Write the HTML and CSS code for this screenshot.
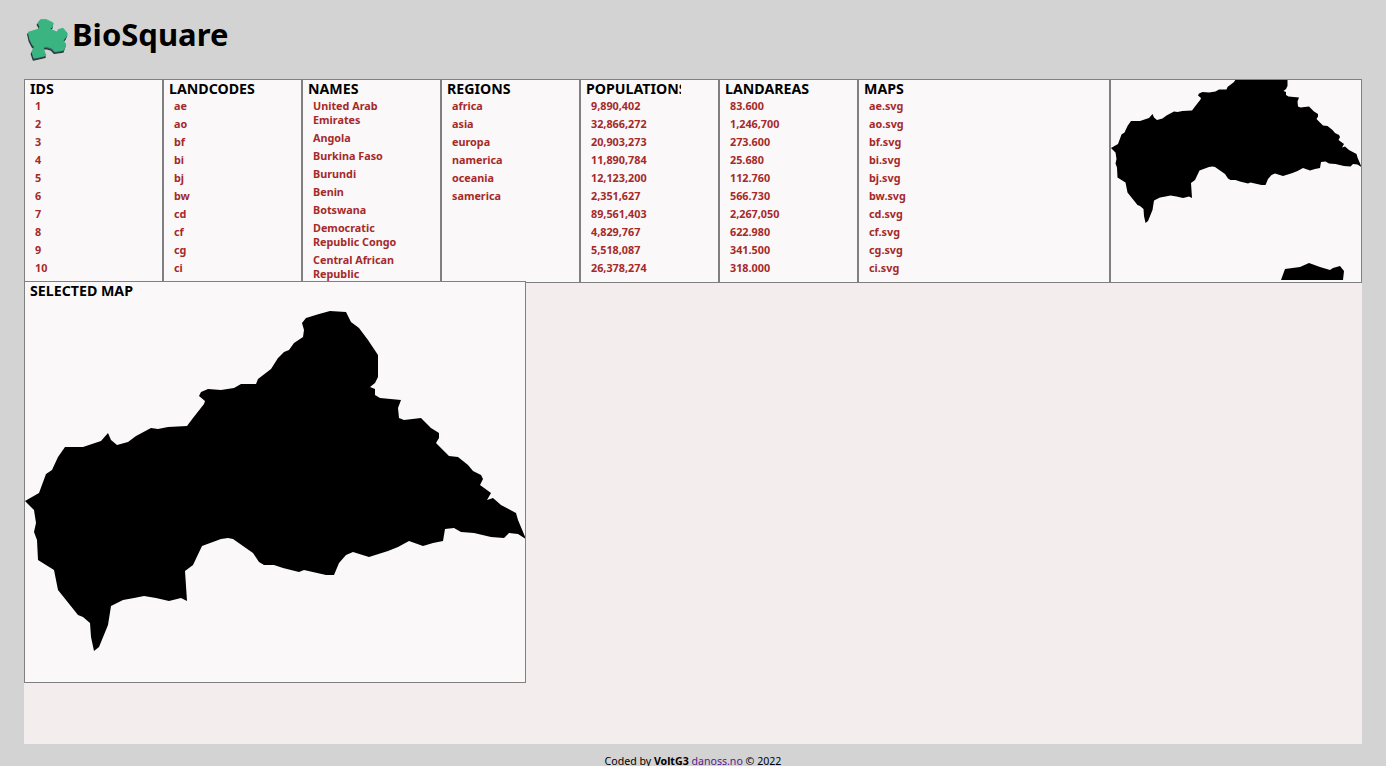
FILE: index.html
```html
<!DOCTYPE html>
<html lang="en">
<head>
<meta charset="utf-8">
<title>BioSquare</title>
<link rel="stylesheet" href="styles.css">
</head>
<body>
<svg class="defs" width="0" height="0" aria-hidden="true">
  <symbol id="cf-map" viewBox="0 0 500 400">
    <path d="M0 220 L14 212 L21 193 L27 189 L33 176 L40 166 L58 166 L76 160 L83 152 L86 159 L92 164 L103 161 L111 155 L126 147 L133 148 L143 146 L162 145 L168 137 L179 123 L180 120 L174 115 L176 111 L183 108 L196 109 L209 107 L216 103 L231 103 L233 98 L246 88 L253 77 L259 71 L264 69 L269 62 L278 56 L279 49 L277 42 L281 37 L294 33 L305 30 L321 31 L326 41 L334 47 L343 59 L353 74 L353 96 L350 102 L345 106 L350 108 L350 114 L355 117 L376 119 L373 127 L374 137 L379 139 L396 137 L406 147 L414 152 L414 157 L411 162 L424 175 L433 176 L443 184 L448 190 L456 194 L458 198 L455 204 L466 212 L462 219 L468 217 L476 224 L491 232 L493 239 L501 258 L493 253 L484 252 L479 257 L466 256 L449 252 L436 251 L429 247 L420 248 L418 260 L408 262 L398 265 L384 260 L373 266 L363 270 L344 276 L328 271 L321 274 L314 282 L309 294 L301 294 L279 289 L274 291 L258 287 L249 284 L239 284 L234 281 L228 272 L208 258 L203 257 L196 258 L177 265 L168 284 L160 290 L162 320 L156 317 L144 320 L131 317 L119 315 L109 317 L98 319 L86 325 L83 344 L74 366 L69 370 L66 356 L65 342 L58 336 L53 334 L33 309 L29 289 L13 279 L12 259 L9 251 L11 242 L9 229 Z"/>
  </symbol>
</svg>
<header class="brand">
  <svg class="logo" viewBox="22 25 125 130" aria-hidden="true">
    <path class="logo-edge" d="M25 68 L58 58 L60 50 L54 40 L62 30 L80 30 L100 40 L98 50 L90 58 L112 68 L116 60 L130 56 L143 72 L138 84 L130 92 L138 104 L132 122 L105 126 L96 116 L84 112 L70 112 L74 128 L78 138 L62 142 L42 146 L36 128 L44 112 L38 106 L30 90 Z"/>
    <path class="logo-face" d="M25 68 L58 58 L60 50 L54 40 L62 30 L80 30 L100 40 L98 50 L90 58 L112 68 L116 60 L130 56 L143 72 L138 84 L130 92 L138 104 L132 122 L105 126 L96 116 L84 112 L70 112 L74 128 L78 138 L62 142 L42 146 L36 128 L44 112 L38 106 L30 90 Z"/>
  </svg>
  <h1 class="title">BioSquare</h1>
</header>
<main class="content">
  <section class="table">
    <div class="col">
      <h2 class="head">IDS</h2>
      <ul class="list"><li>1</li><li>2</li><li>3</li><li>4</li><li>5</li><li>6</li><li>7</li><li>8</li><li>9</li><li>10</li></ul>
    </div>
    <div class="col">
      <h2 class="head">LANDCODES</h2>
      <ul class="list"><li>ae</li><li>ao</li><li>bf</li><li>bi</li><li>bj</li><li>bw</li><li>cd</li><li>cf</li><li>cg</li><li>ci</li></ul>
    </div>
    <div class="col">
      <h2 class="head">NAMES</h2>
      <ul class="list list-names"><li>United Arab Emirates</li><li>Angola</li><li>Burkina Faso</li><li>Burundi</li><li>Benin</li><li>Botswana</li><li>Democratic Republic Congo</li><li>Central African Republic</li></ul>
    </div>
    <div class="col">
      <h2 class="head">REGIONS</h2>
      <ul class="list"><li>africa</li><li>asia</li><li>europa</li><li>namerica</li><li>oceania</li><li>samerica</li></ul>
    </div>
    <div class="col">
      <h2 class="head">POPULATIONS</h2>
      <ul class="list"><li>9,890,402</li><li>32,866,272</li><li>20,903,273</li><li>11,890,784</li><li>12,123,200</li><li>2,351,627</li><li>89,561,403</li><li>4,829,767</li><li>5,518,087</li><li>26,378,274</li></ul>
    </div>
    <div class="col">
      <h2 class="head">LANDAREAS</h2>
      <ul class="list"><li>83.600</li><li>1,246,700</li><li>273.600</li><li>25.680</li><li>112.760</li><li>566.730</li><li>2,267,050</li><li>622.980</li><li>341.500</li><li>318.000</li></ul>
    </div>
    <div class="col col-wide">
      <h2 class="head">MAPS</h2>
      <ul class="list"><li>ae.svg</li><li>ao.svg</li><li>bf.svg</li><li>bi.svg</li><li>bj.svg</li><li>bw.svg</li><li>cd.svg</li><li>cf.svg</li><li>cg.svg</li><li>ci.svg</li></ul>
    </div>
    <div class="col col-wide col-thumb">
      <div class="thumb-window">
        <svg class="thumb" viewBox="0 0 250 200" aria-hidden="true">
          <use href="#cf-map" x="0" y="-42" width="250" height="200"/>
          <path d="M170 200 L174 189 L189 187 L198 183 L209 187 L219 190 L222 188 L229 186 L233 191 L232 200 Z"/>
        </svg>
      </div>
    </div>
  </section>
  <section class="selected">
    <h2 class="head">SELECTED MAP</h2>
    <svg class="selected-map" aria-hidden="true"><use href="#cf-map"/></svg>
  </section>
</main>
<footer class="foot">Coded by <b>VoltG3</b> <a href="#">danoss.no</a> © 2022</footer>
</body>
</html>
```
FILE: styles.css
```css
* { box-sizing: border-box; }
html, body { height: 100%; }
body {
  margin: 0;
  background: #d3d3d3;
  font-family: "Noto Sans", sans-serif;
  color: #000;
  overflow: hidden;
}
.defs { position: absolute; }
.brand {
  height: 79px;
  padding: 13px 0 0 27px;
  display: flex;
  align-items: flex-start;
  gap: 3px;
}
.logo { width: 42px; height: 43px; margin-top: 5px; overflow: visible; }
.logo-edge {
  fill: #2f6a68;
  stroke: #2a3a3c;
  stroke-width: 4;
  stroke-linejoin: round;
  transform: translate(-2px, 6px);
}
.logo-face {
  fill: #3ab582;
  stroke: #3ab582;
  stroke-width: 3;
  stroke-linejoin: round;
}
.title {
  margin: 0;
  font-size: 31px;
  line-height: 42px;
  font-weight: 700;
}
.content {
  width: 1338px;
  height: 665px;
  margin: 0 0 0 24px;
  background: #f3eded;
}
.table { display: flex; height: 204px; }
.col {
  width: 139px;
  height: 204px;
  flex: none;
  background: #faf8f9;
  border: 1px solid #808080;
  padding: 0 5px;
  overflow: hidden;
}
.col-wide { width: 252px; }
.col-thumb { padding: 0; }
.head {
  margin: 0;
  width: 95px;
  overflow: hidden;
  white-space: nowrap;
  font-size: 14.2px;
  line-height: 18px;
  font-weight: 700;
}
.col .head { height: 19px; }
.list {
  list-style: none;
  margin: 0;
  padding: 0 0 0 5px;
  color: #a52a2a;
  font-size: 10.8px;
  line-height: 14px;
  font-weight: 700;
}
.list li { margin-bottom: 4px; }
.list-names { padding-right: 30px; }
.thumb-window { height: 200px; overflow: hidden; }
.thumb { display: block; width: 250px; height: 200px; }
.selected {
  position: relative;
  margin-top: -2px;
  width: 502px;
  height: 402px;
  background: #faf8f9;
  border: 1px solid #808080;
  padding: 0 5px;
}
.selected .head { width: auto; }
.selected-map { position: absolute; left: 0; top: -1px; width: 500px; height: 400px; }
.foot {
  text-align: center;
  font-size: 10.6px;
  line-height: 14px;
  padding-top: 10px;
}
.foot a { color: #551a8b; text-decoration: none; }
```
